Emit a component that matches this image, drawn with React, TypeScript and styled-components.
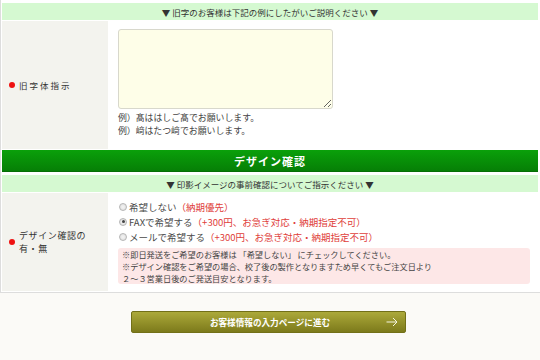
import styled, { createGlobalStyle } from 'styled-components';

const GlobalStyle = createGlobalStyle`
  html, body {
    margin: 0;
    padding: 0;
    background: #fbfaf7;
  }
  body {
    font-family: "Noto Sans CJK JP", "Noto Sans", sans-serif;
    color: #444444;
  }
`;

const Container = styled.div`
  width: 536px;
  background: #ffffff;
  border: 1px solid #dddddd;
  border-top: none;
  padding: 3px 2px 1px 1px;
`;

const Band = styled.div`
  height: 17px;
  background: #d5f9d1;
  font-size: 8.5px;
  color: #333333;
  display: flex;
  align-items: center;
  justify-content: center;
  margin-bottom: 1px;
`;

const Row = styled.div`
  display: grid;
  grid-template-columns: 106px 1fr;
  min-height: ${(p: { $height: number }) => p.$height}px;
`;

const Label = styled.div`
  background: #f3f3ee;
  display: flex;
  align-items: center;
  padding-left: 7px;
  gap: 4px;
  font-size: 9px;
  color: #333333;
  line-height: 13px;
  letter-spacing: 0.6px;
`;

const Dot = styled.span`
  width: 6px;
  height: 6px;
  border-radius: 50%;
  background: #ee1111;
  flex-shrink: 0;
`;

const Spaced = styled.span`
  font-size: 8.5px;
  letter-spacing: 2px;
`;

const Cell = styled.div`
  padding: ${(p: { $pad: string }) => p.$pad};
  display: flex;
  flex-direction: column;
`;

const TextArea = styled.textarea`
  width: 215px;
  height: 80px;
  box-sizing: border-box;
  background: #fefee8;
  border: 1px solid #d8d8cc;
  border-radius: 3px;
  resize: both;
  margin: 0 0 2px;
  outline: none;
`;

const Example = styled.p`
  margin: 0;
  font-size: 8.9px;
  line-height: 13px;
  color: #444444;
`;

const SectionHeader = styled.div`
  height: 21px;
  margin: 1px 0 3px;
  background: linear-gradient(#0aa00a, #067f06);
  border-bottom: 1px solid #066e06;
  color: #ffffff;
  font-weight: bold;
  font-size: 11px;
  letter-spacing: 1px;
  display: flex;
  align-items: center;
  justify-content: center;
`;

const Option = styled.label`
  display: flex;
  align-items: center;
  height: 15px;
  font-size: 9.5px;
  color: #4a4a4a;
  white-space: nowrap;
`;

const Radio = styled.input`
  appearance: none;
  width: 8px;
  height: 8px;
  margin: 0 2px 0 1px;
  border-radius: 50%;
  border: 1px solid #b5b5b5;
  background: radial-gradient(#f4f4f4, #dcdcdc);
  box-sizing: border-box;
  position: relative;
  flex-shrink: 0;

  &:checked::after {
    content: '';
    position: absolute;
    left: 1.5px;
    top: 1.5px;
    width: 3px;
    height: 3px;
    border-radius: 50%;
    background: #444444;
  }
`;

const Red = styled.span`
  color: #e0403a;
`;

const Note = styled.div`
  margin-top: 4px;
  margin-right: 8px;
  background: #fde7e7;
  border-radius: 3px;
  padding: 0 4px;
  font-size: 8.2px;
  line-height: 12px;
  color: #444444;
  white-space: nowrap;
`;

const Footer = styled.div`
  display: flex;
  justify-content: center;
  padding: 18px 4px 0 0;
`;

const NextButton = styled.button`
  position: relative;
  width: 275px;
  height: 22px;
  border: 1px solid #727018;
  border-radius: 2px;
  background: linear-gradient(#aca93a, #7c7a1b);
  color: #ffffff;
  font-family: "Noto Sans CJK JP", sans-serif;
  font-weight: bold;
  font-size: 8.6px;
  display: flex;
  align-items: center;
  justify-content: center;
  padding: 0 0 0 4px;
  cursor: pointer;
`;

const Arrow = styled.svg`
  position: absolute;
  right: 7px;
  top: 5px;
`;

export default function App() {
  return (
    <>
      <GlobalStyle />
      <Container>
        <Band>▼ 旧字のお客様は下記の例にしたがいご説明ください ▼</Band>
        <Row $height={128}>
          <Label>
            <Dot />
            <Spaced>旧字体指示</Spaced>
          </Label>
          <Cell $pad="8px 0 0 10px">
            <TextArea />
            <Example>例）髙ははしご髙でお願いします。</Example>
            <Example>例）﨑はたつ﨑でお願いします。</Example>
          </Cell>
        </Row>
        <SectionHeader>デザイン確認</SectionHeader>
        <Band>▼ 印影イメージの事前確認についてご指示ください ▼</Band>
        <Row $height={98}>
          <Label>
            <Dot />
            <span>
              デザイン確認の
              <br />
              有・無
            </span>
          </Label>
          <Cell $pad="6px 0 4px 10px">
            <Option>
              <Radio type="radio" name="design" />
              希望しない<Red>（納期優先）</Red>
            </Option>
            <Option>
              <Radio type="radio" name="design" defaultChecked />
              FAXで希望する<Red>（+300円、お急ぎ対応・納期指定不可）</Red>
            </Option>
            <Option>
              <Radio type="radio" name="design" />
              メールで希望する<Red>（+300円、お急ぎ対応・納期指定不可）</Red>
            </Option>
            <Note>
              ※即日発送をご希望のお客様は 「希望しない」 にチェックしてください。
              <br />
              ※デザイン確認をご希望の場合、校了後の製作となりますため早くてもご注文日より
              <br />
              　２～３営業日後のご発送目安となります。
            </Note>
          </Cell>
        </Row>
      </Container>
      <Footer>
        <NextButton type="button">
          お客様情報の入力ページに進む
          <Arrow width="12" height="10" viewBox="0 0 12 10">
            <path d="M0.5 5H11M7 1l4 4-4 4" fill="none" stroke="#f4f4e0" strokeWidth="1" />
          </Arrow>
        </NextButton>
      </Footer>
    </>
  );
}
